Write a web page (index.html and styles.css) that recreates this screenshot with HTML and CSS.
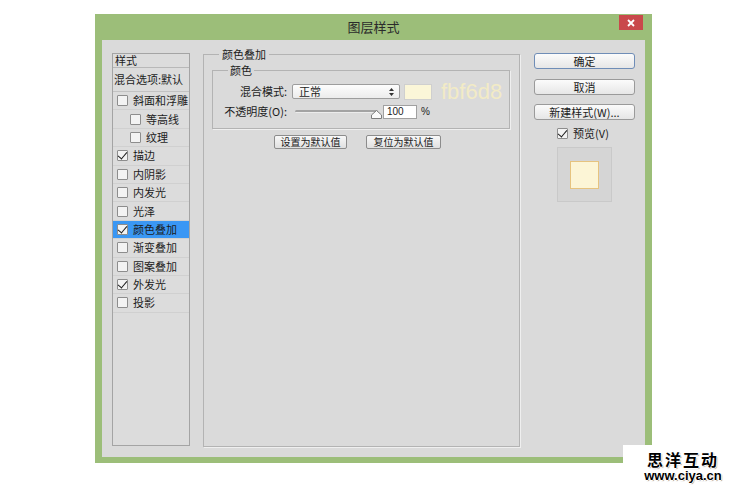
FILE: index.html
```html
<!DOCTYPE html>
<html lang="zh-CN">

<head>
    <meta charset="UTF-8">
    <title>图层样式</title>
    <link rel="stylesheet" href="styles.css">
</head>

<body>
    <div class="dialog">
        <div class="titlebar">
            <span></span>
            <h1 class="title">图层样式</h1>
            <button class="close" type="button">
                <svg width="8" height="8" viewBox="0 0 8 8"><path d="M1 1L7 7M7 1L1 7" stroke="#fff" stroke-width="1.8"/></svg>
            </button>
        </div>

        <div class="content">
            <!-- left: style list -->
            <ul class="style-list">
                <li class="list-head">样式</li>
                <li class="list-blend">混合选项:默认</li>
                <li class="item"><span class="box"></span>斜面和浮雕</li>
                <li class="item sub"><span class="box"></span>等高线</li>
                <li class="item sub"><span class="box"></span>纹理</li>
                <li class="item"><span class="box checked"></span>描边</li>
                <li class="item"><span class="box"></span>内阴影</li>
                <li class="item"><span class="box"></span>内发光</li>
                <li class="item"><span class="box"></span>光泽</li>
                <li class="item active"><span class="box checked"></span>颜色叠加</li>
                <li class="item"><span class="box"></span>渐变叠加</li>
                <li class="item"><span class="box"></span>图案叠加</li>
                <li class="item"><span class="box checked"></span>外发光</li>
                <li class="item"><span class="box"></span>投影</li>
            </ul>

            <!-- middle: color overlay settings -->
            <fieldset class="panel">
                <legend>颜色叠加</legend>
                <fieldset class="group">
                    <legend>颜色</legend>
                    <div class="field">
                        <label class="field-label">混合模式:</label>
                        <div class="select">
                            <span>正常</span>
                            <svg width="5" height="8" viewBox="0 0 5 8"><path d="M2.5 0L5 3H0Z M2.5 8L5 5H0Z" fill="#333"/></svg>
                        </div>
                        <span class="swatch"></span>
                        <span class="hex">fbf6d8</span>
                    </div>
                    <div class="field">
                        <label class="field-label">不透明度(O):</label>
                        <div class="slider">
                            <span class="track"></span>
                            <svg class="thumb" width="11" height="9" viewBox="0 0 11 9"><path d="M5.5 0.5L10.5 5V8.5H0.5V5Z" fill="#fafafa" stroke="#7c7c7c"/></svg>
                        </div>
                        <span class="num">100</span>
                        <span class="pct">%</span>
                    </div>
                </fieldset>
                <div class="defaults">
                    <button type="button" class="small-btn">设置为默认值</button>
                    <button type="button" class="small-btn">复位为默认值</button>
                </div>
            </fieldset>

            <!-- right: actions -->
            <div class="actions">
                <button type="button" class="btn primary">确定</button>
                <button type="button" class="btn">取消</button>
                <button type="button" class="btn">新建样式(W)...</button>
                <div class="preview-check"><span class="box checked"></span>预览(V)</div>
                <div class="preview">
                    <span class="preview-swatch"></span>
                </div>
            </div>
        </div>
    </div>

    <div class="watermark">
        <div class="wm-name">思洋互动</div>
        <div class="wm-url">www.ciya.cn</div>
    </div>
</body>

</html>
```

FILE: styles.css
```css
/* General */
* {
    box-sizing: border-box;
    margin: 0;
    padding: 0;
}

:root {
    --frame: #9cbe79;
    --face: #dadada;
    --text: #1c1c1c;
    --line: #b3b3b3;
    --cjk: "Noto Sans CJK SC", "Liberation Sans", sans-serif;
}

body {
    position: relative;
    width: 750px;
    height: 489px;
    background: #fff;
    color: var(--text);
    font-family: var(--cjk);
    font-size: 11px;
    line-height: 13px;
    overflow: hidden;
}

button {
    font-family: var(--cjk);
    color: var(--text);
}

/* Dialog frame */
.dialog {
    width: 557px;
    height: 449px;
    margin: 14px 0 0 95px;
    background: var(--frame);
    padding: 0 7px 6px;
}

.titlebar {
    display: grid;
    grid-template-columns: 1fr auto 1fr;
    height: 26px;
    margin: 0 -7px;
}

.title {
    font-size: 13px;
    font-weight: normal;
    line-height: 26px;
    color: #2b2b2b;
}

.close {
    justify-self: end;
    width: 24px;
    height: 15px;
    margin: 1px 9px 0 0;
    border: none;
    background: #c9494b;
    display: flex;
    align-items: center;
    justify-content: center;
}

.content {
    display: flex;
    align-items: flex-start;
    height: 417px;
    background: var(--face);
    padding: 9px 0 0 10px;
}

/* Style list */
.style-list {
    list-style: none;
    width: 78px;
    height: 393px;
    margin-top: 4px;
    border: 1px solid #a4a4a4;
    background: #dcdcdc;
}

.list-head {
    height: 14px;
    line-height: 13px;
    padding-left: 2px;
    border-bottom: 1px solid #b8b8b8;
}

.list-blend {
    height: 24px;
    line-height: 22px;
    padding-left: 1px;
    border-bottom: 1px solid #c2c2c2;
}

.item {
    display: flex;
    align-items: center;
    height: 18.4px;
    padding-left: 4px;
    border-bottom: 1px solid #d0d0d0;
}

.item.sub {
    padding-left: 17px;
}

.item.active {
    background: #3a97f4;
}

.box {
    position: relative;
    width: 11px;
    height: 11px;
    margin-right: 5px;
    border: 1px solid #8d8d8d;
    border-radius: 1px;
    background: #f3f3f3;
    flex-shrink: 0;
}

.box.checked::after {
    content: "";
    position: absolute;
    left: 2px;
    top: -1px;
    width: 4px;
    height: 8px;
    border: solid #1b1b1b;
    border-width: 0 1.5px 1.5px 0;
    transform: rotate(40deg);
}

/* Middle panel */
.panel {
    width: 317px;
    height: 399px;
    margin: -1px 0 0 13px;
    border: 1px solid var(--line);
    box-shadow: 1px 1px 0 #efefef;
    padding: 0 9px 0 8px;
}

.panel legend {
    margin-left: 7px;
    padding: 0 3px;
    line-height: 13px;
}

.group {
    margin-top: 3px;
    border: 1px solid var(--line);
    box-shadow: 1px 1px 0 #efefef;
    padding: 7px 0 9px 0;
}

.group legend {
    margin-left: 15px;
    padding: 0 2px;
    line-height: 13px;
}

.field {
    display: flex;
    align-items: center;
    height: 15px;
}

.field + .field {
    margin-top: 5px;
}

.field-label {
    width: 74px;
    text-align: right;
}

.select {
    display: flex;
    align-items: center;
    justify-content: space-between;
    width: 108px;
    height: 15px;
    margin-left: 5px;
    padding: 0 5px 0 6px;
    border: 1px solid #9d9d9d;
    border-radius: 2px;
    background: linear-gradient(#fdfdfd, #ececec);
}

.swatch {
    width: 28px;
    height: 16px;
    margin-left: 4px;
    border: 1px solid #cfcfcf;
    background: #fbf6d8;
}

.hex {
    margin-left: 9px;
    font-family: "Liberation Sans", sans-serif;
    font-size: 22px;
    line-height: 16px;
    color: #f2ebc6;
}

.slider {
    position: relative;
    width: 86px;
    height: 14px;
    margin-left: 8px;
}

.track {
    position: absolute;
    left: 0;
    right: 3px;
    top: 5px;
    height: 3px;
    border-radius: 2px;
    background: #a3a3a3;
    border-bottom: 1px solid #ececec;
}

.thumb {
    position: absolute;
    left: 76px;
    top: 5px;
}

.num {
    width: 34px;
    height: 14px;
    margin-left: 2px;
    padding-left: 3px;
    border: 1px solid #a0a0a0;
    background: #fff;
    font-family: "Liberation Sans", sans-serif;
    font-size: 10px;
    line-height: 12px;
}

.pct {
    margin-left: 4px;
    font-family: "Liberation Sans", sans-serif;
    font-size: 10px;
}

.defaults {
    display: flex;
    gap: 19px;
    margin: 6px 0 0 62px;
}

.small-btn {
    width: 73px;
    height: 14px;
    border: 1px solid #8c8c8c;
    border-radius: 2px;
    background: linear-gradient(#f8f8f8, #e0e0e0);
    font-size: 10px;
    line-height: 12px;
}

.small-btn + .small-btn {
    width: 75px;
}

/* Right column */
.actions {
    display: flex;
    flex-direction: column;
    align-items: center;
    width: 101px;
    margin: 4px 0 0 14px;
}

.btn {
    width: 101px;
    height: 16px;
    border: 1px solid #9a9a9a;
    border-radius: 3px;
    background: linear-gradient(#fbfbfb, #e6e6e6);
    font-size: 11px;
    line-height: 14px;
}

.btn.primary {
    border-color: #6f8db7;
}

.btn + .btn {
    margin-top: 10px;
}

.btn + .btn + .btn {
    margin-top: 9px;
}

.preview-check {
    display: flex;
    align-items: center;
    height: 11px;
    margin: 8px 0 0 -3px;
}

.preview {
    display: flex;
    justify-content: center;
    width: 55px;
    height: 55px;
    margin-top: 8px;
    border: 1px solid #c9c9c9;
    background: #d5d5d5;
}

.preview-swatch {
    width: 29px;
    height: 28px;
    margin-top: 13px;
    border: 1px solid #e6c37f;
    background: #fcf5d6;
}

/* Watermark overlay */
.watermark {
    position: absolute;
    left: 623px;
    top: 445px;
    width: 127px;
    height: 44px;
    background: #fff;
    padding: 5px 7px 0 0;
    text-align: center;
    color: #000;
    font-weight: bold;
    text-shadow: 1px 0 0 #fff, -1px 0 0 #fff, 0 1px 0 #fff, 0 -1px 0 #fff, 1px 1px 1px #888;
}

.wm-name {
    font-size: 16px;
    line-height: 18px;
    letter-spacing: 2px;
}

.wm-url {
    margin-top: 2px;
    font-family: "Liberation Sans", sans-serif;
    font-size: 13px;
    line-height: 12px;
}
```
